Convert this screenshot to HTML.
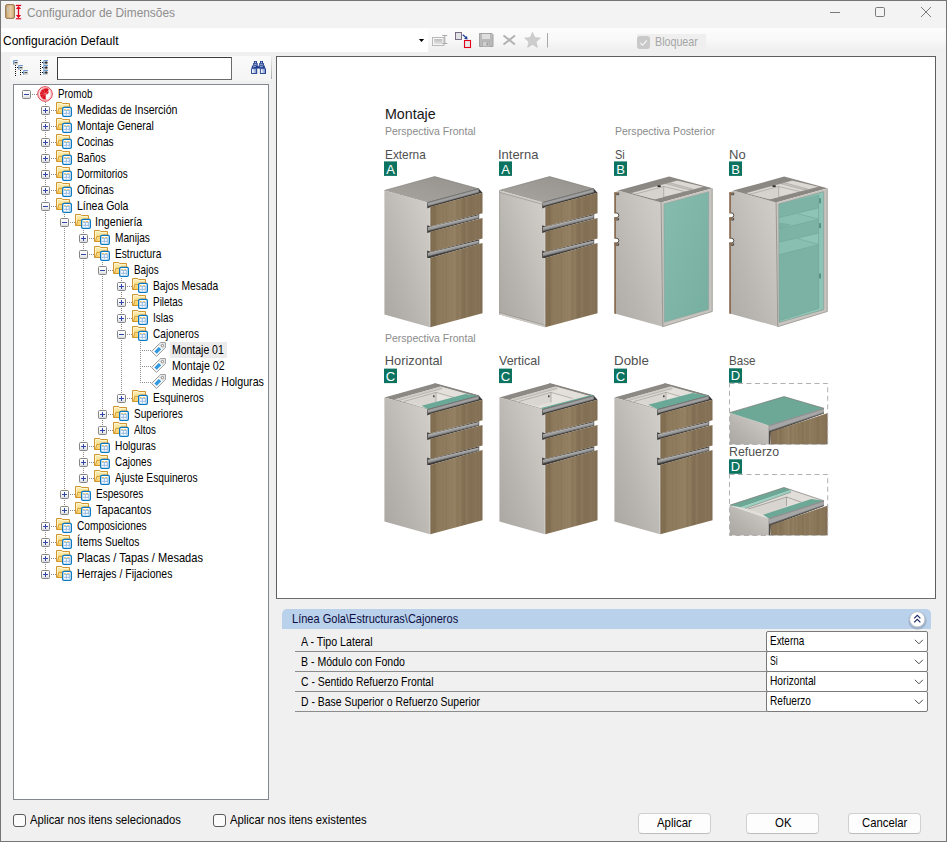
<!DOCTYPE html>
<html lang="es"><head><meta charset="utf-8"><title>Configurador de Dimensões</title>
<style>
*{box-sizing:border-box;margin:0;padding:0}
html,body{width:947px;height:842px;overflow:hidden;background:#f0f0f0}
body{position:relative;font-family:"Liberation Sans",sans-serif;font-size:11px;color:#000}
.abs{position:absolute}
.t{position:absolute;white-space:pre;line-height:1}
#win{position:absolute;left:0;top:0;width:947px;height:842px;border:1px solid #757575;pointer-events:none;z-index:50}
#title{position:absolute;left:1px;top:1px;width:945px;height:27px;background:#f3f3f3}
#tbrow{position:absolute;left:1px;top:28px;width:945px;height:24px;background:linear-gradient(#fcfcfc 0%,#f8f8f8 50%,#eeeeee 100%)}
#combo{position:absolute;left:1px;top:28px;width:427px;height:24px;background:linear-gradient(#fafafa 0,#ffffff 1px)}
#strip{position:absolute;left:10px;top:56px;width:262px;height:25px;background:linear-gradient(#fafafa,#f4f4f4);border-radius:3px}
#search{position:absolute;left:57px;top:57px;width:175px;height:23px;background:#fff;border:1px solid #6b6b6b;border-top-color:#3c3c3c;border-left-color:#3c3c3c}
#tree{position:absolute;left:13px;top:84px;width:256px;height:716px;background:#fff;border:1px solid #828790}
#view{position:absolute;left:276px;top:56px;width:660px;height:543px;background:#fff;border:1px solid #5f5f5f;border-bottom-color:#6e6e6e}
.tl{font-size:11px;letter-spacing:-0.22px;color:#000}
#hdr{position:absolute;left:282px;top:609px;width:649px;height:20px;background:#b9d1ea;border-radius:5px 5px 0 0}
.rowline{position:absolute;left:295px;width:472px;height:1px;background:#8c8c8c}
.cb{position:absolute;left:766px;width:162px;height:21px;background:#fff;border:1px solid #7a7a7a;border-radius:2px}
.btn{position:absolute;top:813px;width:73px;height:21px;background:#fdfdfd;border:1px solid #d0d0d0;border-bottom-color:#bdbdbd;border-radius:4px}
.chk{position:absolute;top:814px;width:13px;height:13px;background:#fbfbfb;border:1px solid #5a5a5a;border-radius:3px}
.b12{font-size:12px;letter-spacing:-0.36px}
.sel{position:absolute;background:#ececec}
</style></head>
<body>
<div id="title"></div>
<svg class="abs" style="left:4px;top:3px" width="20" height="18" viewBox="0 0 20 18">
<defs><linearGradient id="dg" x1="0" x2="1"><stop offset="0" stop-color="#c9a674"/><stop offset=".55" stop-color="#e9cda2"/><stop offset="1" stop-color="#d0ab78"/></linearGradient></defs>
<rect x="1.700" y="1.700" width="8.700" height="13.600" rx="1.200" fill="url(#dg)" stroke="#8d6c41" stroke-width="1"/>
<rect x="3.300" y="4.200" width="1.100" height="4.600" rx=".4" fill="#f0f0f0" stroke="#999" stroke-width=".4"/>
<rect x="11.900" y="1.800" width="5.300" height="1.300" fill="#e2001a"/><rect x="11.900" y="15.200" width="5.300" height="1.100" fill="#e2001a"/>
<path d="M14.500 3.100l2.600 2.900h-5.200zM14.500 15.200l2.600-3.100h-5.200z" fill="#e2001a"/><path d="M14.500 5.500v7" stroke="#e2001a" stroke-width="1.300"/>
</svg>
<span class="t" style="left:26.90px;top:6.00px;font-size:13px;color:#8e8e8e;transform:scaleX(0.9142);transform-origin:0 0;">Configurador de Dimensões</span>
<svg class="abs" style="left:825px;top:1px" width="120" height="26" viewBox="0 0 120 26" fill="none" stroke="#7a7a7a" stroke-width="1">
<path d="M5 11.5h10"/><rect x="50.5" y="6.5" width="9" height="9" rx="1.2"/><path d="M96 6l10 10M106 6l-10 10"/></svg>
<div id="tbrow"></div><div id="combo"></div>
<span class="t" style="left:2.60px;top:34.00px;font-size:13px;color:#000;transform:scaleX(0.9238);transform-origin:0 0;">Configuración Default</span>
<svg class="abs" style="left:418px;top:38px" width="8" height="5"><path d="M0.900 1h5.200l-2.600 3.100z" fill="#000"/></svg>
<svg class="abs" style="left:430px;top:30px" width="122" height="20" viewBox="430 30 122 20">
<defs><linearGradient id="gr1" x1="0" x2="0" y1="0" y2="1"><stop offset="0" stop-color="#bdbdbd"/><stop offset="1" stop-color="#e2e2e2"/></linearGradient></defs>
<rect x="432.500" y="37.500" width="11.500" height="8" fill="#f6f6f6" stroke="#b9b9b9"/><rect x="434.200" y="39" width="8.200" height="5" fill="url(#gr1)"/>
<path d="M442.300 35.500h5M442.300 43.500h5M444.800 35.500v8" stroke="#a9a9a9" stroke-width="1" fill="none"/>
<rect x="455.500" y="32.500" width="6" height="7" fill="#e2e2e6" stroke="#6d5f78" stroke-width=".9"/>
<rect x="464.500" y="40.500" width="6" height="7" fill="#e9e9e9" stroke="#e3001b" stroke-width="1.100"/>
<path d="M462.800 34.800l3.400 3" stroke="#1f3f9a" fill="none" stroke-width="1.200"/><path d="M467.600 39.400l-3.600-.6 3-2.800z" fill="#1f3f9a"/>
<path d="M479.500 33.500h12.500l1 1v12h-13.500z" fill="#b9b9b9" stroke="#a3a3a3"/><rect x="482" y="34" width="8" height="5" fill="#dedede"/><rect x="482.500" y="41.500" width="7" height="5" fill="#d0d0d0" stroke="#a8a8a8" stroke-width=".6"/><rect x="486.500" y="42.500" width="2" height="3" fill="#9f9f9f"/>
<path d="M503.500 35.500l11.500 9M515 35.500l-11.500 9" stroke="#b1b1b1" stroke-width="2" fill="none"/>
<path d="M532.500 32.300l2.300 5.300 5.600.5-4.300 3.800 1.300 5.500-4.900-3-4.900 3 1.300-5.500-4.300-3.800 5.600-.5z" fill="#cdcdcd" stroke="#c3c3c3" stroke-width=".6"/>
<path d="M547.500 33v14.500" stroke="#a9a9a9"/>
</svg>
<div class="abs" style="left:637px;top:34px;width:69px;height:17px;background:#efefef"></div>
<div class="abs" style="left:637px;top:36px;width:13px;height:13px;background:#c9c9c9;border-radius:3px"></div>
<svg class="abs" style="left:637px;top:36px" width="13" height="13"><path d="M3.300 6.800l2.300 2.300 4.200-4.600" stroke="#f4f4f4" stroke-width="1.200" fill="none"/></svg>
<span class="t" style="left:654.80px;top:35.00px;font-size:13px;color:#a6a6a6;transform:scaleX(0.8231);transform-origin:0 0;">Bloquear</span>
<div id="strip"></div><div class="abs" style="left:271px;top:57px;width:1px;height:22px;background:linear-gradient(#ececec,#a8a8a8)"></div>
<svg class="abs" style="left:12px;top:59px" width="40" height="18" viewBox="12 59 40 18">
<defs><linearGradient id="nd" x1="0" x2="0" y1="0" y2="1"><stop offset="0" stop-color="#ffffff"/><stop offset="1" stop-color="#c4c4c4"/></linearGradient></defs>
<g fill="#111" shape-rendering="crispEdges"><rect x="15" y="65" width="1" height="1"/><rect x="15" y="67" width="1" height="1"/><rect x="15" y="69" width="1" height="1"/><rect x="15" y="71" width="1" height="1"/><rect x="15" y="73" width="1" height="1"/><rect x="15" y="75" width="1" height="1"/><rect x="20" y="70" width="1" height="1"/><rect x="20" y="72" width="1" height="1"/><rect x="20" y="74" width="1" height="1"/><rect x="17" y="67" width="1" height="1"/><rect x="22" y="72" width="1" height="1"/><rect x="40" y="60" width="1" height="1"/><rect x="40" y="62" width="1" height="1"/><rect x="40" y="64" width="1" height="1"/><rect x="40" y="66" width="1" height="1"/><rect x="40" y="68" width="1" height="1"/><rect x="40" y="70" width="1" height="1"/><rect x="40" y="72" width="1" height="1"/><rect x="40" y="74" width="1" height="1"/><rect x="42" y="62" width="1" height="1"/><rect x="42" y="67" width="1" height="1"/><rect x="42" y="72" width="1" height="1"/></g>
<rect x="13.3" y="60.2" width="4.600" height="4.400" fill="url(#nd)"/>
<path d="M13.7 64.6V60.6H17.9" stroke="#5b8ec8" stroke-width="1" fill="none"/>
<rect x="18.3" y="65.2" width="4.600" height="4.400" fill="url(#nd)"/>
<path d="M18.7 69.6V65.6H22.9" stroke="#5b8ec8" stroke-width="1" fill="none"/>
<rect x="23.3" y="70.2" width="4.600" height="4.400" fill="url(#nd)"/>
<path d="M23.7 74.6V70.6H27.9" stroke="#5b8ec8" stroke-width="1" fill="none"/>
<rect x="43.4" y="60.2" width="4.600" height="4.400" fill="url(#nd)"/>
<path d="M43.8 64.6V60.6H48.0" stroke="#5b8ec8" stroke-width="1" fill="none"/>
<rect x="43.4" y="65.2" width="4.600" height="4.400" fill="url(#nd)"/>
<path d="M43.8 69.6V65.6H48.0" stroke="#5b8ec8" stroke-width="1" fill="none"/>
<rect x="43.4" y="70.2" width="4.600" height="4.400" fill="url(#nd)"/>
<path d="M43.8 74.6V70.6H48.0" stroke="#5b8ec8" stroke-width="1" fill="none"/>
<rect x="14.6" y="62.1" width="2.800" height="1" fill="#3a3a3a"/>
<rect x="19.6" y="67.1" width="2.800" height="1" fill="#3a3a3a"/>
<rect x="24.6" y="72.1" width="2.800" height="1" fill="#3a3a3a"/>
<rect x="44.6" y="62.1" width="3" height="1" fill="#2a2a2a"/><rect x="45.6" y="61.1" width="1" height="3" fill="#2a2a2a"/>
<rect x="44.6" y="67.1" width="3" height="1" fill="#2a2a2a"/><rect x="45.6" y="66.1" width="1" height="3" fill="#2a2a2a"/>
<rect x="44.6" y="72.1" width="3" height="1" fill="#2a2a2a"/><rect x="45.6" y="71.1" width="1" height="3" fill="#2a2a2a"/>
</svg>
<div id="search"></div>
<svg class="abs" style="left:250px;top:60px" width="17" height="15" viewBox="0 0 17 15">
<defs><linearGradient id="bw" x1="0" x2="1"><stop offset="0" stop-color="#ffffff"/><stop offset="1" stop-color="#7d95cf"/></linearGradient></defs>
<g fill="#1d3c8e"><rect x="3.900" y="1" width="3" height="2.300"/><rect x="3.100" y="3.100" width="4.600" height="2.500"/><path d="M2 5.400h6.200v3.200h-6.700z"/><rect x="1.100" y="8.400" width="6.100" height="5.500"/>
<rect x="10" y="1" width="3" height="2.300"/><rect x="9.200" y="3.100" width="4.700" height="2.500"/><path d="M8.800 5.400h5.800l.7 3.200h-6.500z"/><rect x="9.900" y="8.400" width="6.100" height="5.500"/><rect x="7.600" y="6.300" width="1.800" height="2.200"/></g>
<rect x="2" y="9.100" width="4.200" height="3.900" fill="url(#bw)"/><rect x="10.800" y="9.100" width="4.200" height="3.900" fill="url(#bw)"/>
<g fill="#e8eefb"><rect x="4.900" y="1.800" width="1" height="1"/><rect x="11" y="1.800" width="1" height="1"/></g>
<path d="M3.900 4.300h2.800M10 4.300h2.800M2.900 6.900l2.800-.5M9.800 6.700h3" stroke="#c3d0ef" stroke-width=".8" fill="none"/>
</svg>
<div id="tree"></div>
<svg class="abs" style="left:14px;top:85px" width="254" height="714" viewBox="14 85 254 714">
<defs>
<linearGradient id="fo" x1="0" x2="0" y1="0" y2="1"><stop offset="0" stop-color="#fdf0bd"/><stop offset=".5" stop-color="#fbe08c"/><stop offset="1" stop-color="#f6cd63"/></linearGradient>
<linearGradient id="ex" x1="0" x2="0" y1="0" y2="1"><stop offset="0" stop-color="#ffffff"/><stop offset=".6" stop-color="#f4f4f4"/><stop offset="1" stop-color="#d4d4d4"/></linearGradient>
<g id="fold">
<path d="M0.500 0.500h5.300l0.800 1h6.900v10h-13z" fill="url(#fo)" stroke="#d29631" stroke-width="1" stroke-linejoin="round"/>
<path d="M1.500 10.500v-9h3.600l.8 1h6.600" stroke="#fff9e0" stroke-width=".8" fill="none" opacity=".85"/>
<path d="M1.300 11.400l1.600-5h5" stroke="#d29631" stroke-width=".9" fill="none"/>
<path d="M8.500 4.300h6.200v1.500h-6.200z" fill="#f2a43a" opacity=".75"/>
<rect x="6.650" y="5.450" width="8.700" height="8.900" rx="1.300" fill="#fff" stroke="#0a78c2" stroke-width="1.300"/>
<path d="M8 7.500h1.800M11.100 7.500h2.100" stroke="#f7c331" stroke-width=".9"/>
<path d="M8 8.300h5.600M8 11.300h5.600M10.300 7.900v4.900M13.300 7.900v4.900" stroke="#8db2dd" stroke-width=".9" fill="none"/>
</g>
<g id="tag">
<path d="M0.600 9.500L8.700 1.400 9.500 .600H14.400V5.500L5.500 14.400z" fill="#fbfbfb" stroke="#8a8a8a" stroke-width=".9" stroke-linejoin="round"/>
<path d="M9.300 1.300h4.600v4l-2 2-4.700-3.800z" fill="#e6e6e6"/>
<path d="M3.400 9.500l4.300-4.400 2.500 2.200-4.300 4.500z" fill="#2190dd"/>
<path d="M4.500 8.500l2.400 2.300M5.600 7.400l2.400 2.300M6.700 6.300l2.400 2.300" stroke="#8cc6ee" stroke-width=".4"/>
<circle cx="11.400" cy="3.600" r="1.200" fill="#fff" stroke="#777" stroke-width=".8"/>
</g>
<g id="plus"><rect x="0.500" y="0.500" width="8" height="8" rx="1" fill="url(#ex)" stroke="#858585"/><path d="M2 4.500h5M4.500 2v5" stroke="#2f47a6" stroke-width="1" shape-rendering="crispEdges"/></g>
<g id="minus"><rect x="0.500" y="0.500" width="8" height="8" rx="1" fill="url(#ex)" stroke="#858585"/><path d="M2 4.500h5" stroke="#2f47a6" stroke-width="1" shape-rendering="crispEdges"/></g>
</defs>
<path d="M45.5 102.0V575.0M32.0 94.5H37.0M51.0 110.5H56.0M51.0 126.5H56.0M51.0 142.5H56.0M51.0 158.5H56.0M51.0 174.5H56.0M51.0 190.5H56.0M64.5 214.0V511.0M51.0 206.5H56.0M83.5 230.0V479.0M70.0 222.5H75.0M89.0 238.5H94.0M102.5 262.0V431.0M89.0 254.5H94.0M121.5 278.0V399.0M108.0 270.5H113.0M127.0 286.5H132.0M127.0 302.5H132.0M127.0 318.5H132.0M140.5 342.0V383.0M127.0 334.5H132.0M142.0 350.5H151.0M142.0 366.5H151.0M142.0 382.5H151.0M127.0 398.5H132.0M108.0 414.5H113.0M108.0 430.5H113.0M89.0 446.5H94.0M89.0 462.5H94.0M89.0 478.5H94.0M70.0 494.5H75.0M70.0 510.5H75.0M51.0 526.5H56.0M51.0 542.5H56.0M51.0 558.5H56.0M51.0 574.5H56.0" stroke="#8c8c8c" stroke-width="1" stroke-dasharray="1 1" fill="none" shape-rendering="crispEdges"/>
<use href="#minus" x="22" y="90"/>
<g transform="translate(37,86)"><circle cx="8" cy="8" r="7.300" fill="#fff" stroke="#d9232e" stroke-width=".9"/><circle cx="8" cy="8" r="6.200" fill="none" stroke="#e8707a" stroke-width=".5"/><path d="M8.700 13.700A5.700 5.700 0 0 1 8.700 2.300L10.800 2.600 11.800 3.800 11.100 4.900 12 6.200 11 7 11.200 8.100 8.700 8.400z" fill="#dc0f1c"/><path d="M8.600 8L3.500 5.200M8.600 8L3 8.500M8.600 8L4.500 11.800M8.600 8L6.500 3M8.600 8L10.800 5M8.600 8L11 7" stroke="#f6b5ba" stroke-width=".35"/></g>
<use href="#plus" x="41" y="106"/>
<use href="#fold" x="56" y="102"/>
<use href="#plus" x="41" y="122"/>
<use href="#fold" x="56" y="118"/>
<use href="#plus" x="41" y="138"/>
<use href="#fold" x="56" y="134"/>
<use href="#plus" x="41" y="154"/>
<use href="#fold" x="56" y="150"/>
<use href="#plus" x="41" y="170"/>
<use href="#fold" x="56" y="166"/>
<use href="#plus" x="41" y="186"/>
<use href="#fold" x="56" y="182"/>
<use href="#minus" x="41" y="202"/>
<use href="#fold" x="56" y="198"/>
<use href="#minus" x="60" y="218"/>
<use href="#fold" x="75" y="214"/>
<use href="#plus" x="79" y="234"/>
<use href="#fold" x="94" y="230"/>
<use href="#minus" x="79" y="250"/>
<use href="#fold" x="94" y="246"/>
<use href="#minus" x="98" y="266"/>
<use href="#fold" x="113" y="262"/>
<use href="#plus" x="117" y="282"/>
<use href="#fold" x="132" y="278"/>
<use href="#plus" x="117" y="298"/>
<use href="#fold" x="132" y="294"/>
<use href="#plus" x="117" y="314"/>
<use href="#fold" x="132" y="310"/>
<use href="#minus" x="117" y="330"/>
<use href="#fold" x="132" y="326"/>
<use href="#tag" x="151" y="342"/>
<use href="#tag" x="151" y="358"/>
<use href="#tag" x="151" y="374"/>
<use href="#plus" x="117" y="394"/>
<use href="#fold" x="132" y="390"/>
<use href="#plus" x="98" y="410"/>
<use href="#fold" x="113" y="406"/>
<use href="#plus" x="98" y="426"/>
<use href="#fold" x="113" y="422"/>
<use href="#plus" x="79" y="442"/>
<use href="#fold" x="94" y="438"/>
<use href="#plus" x="79" y="458"/>
<use href="#fold" x="94" y="454"/>
<use href="#plus" x="79" y="474"/>
<use href="#fold" x="94" y="470"/>
<use href="#plus" x="60" y="490"/>
<use href="#fold" x="75" y="486"/>
<use href="#plus" x="60" y="506"/>
<use href="#fold" x="75" y="502"/>
<use href="#plus" x="41" y="522"/>
<use href="#fold" x="56" y="518"/>
<use href="#plus" x="41" y="538"/>
<use href="#fold" x="56" y="534"/>
<use href="#plus" x="41" y="554"/>
<use href="#fold" x="56" y="550"/>
<use href="#plus" x="41" y="570"/>
<use href="#fold" x="56" y="566"/>
</svg>
<div class="sel" style="left:170px;top:342px;width:57px;height:16px"></div>
<span class="t" style="left:58.30px;top:87.00px;font-size:13px;color:#000;transform:scaleX(0.7543);transform-origin:0 0;">Promob</span>
<span class="t" style="left:77.30px;top:103.00px;font-size:13px;color:#000;transform:scaleX(0.8130);transform-origin:0 0;">Medidas de Inserción</span>
<span class="t" style="left:77.30px;top:119.00px;font-size:13px;color:#000;transform:scaleX(0.8000);transform-origin:0 0;">Montaje General</span>
<span class="t" style="left:77.30px;top:135.00px;font-size:13px;color:#000;transform:scaleX(0.7787);transform-origin:0 0;">Cocinas</span>
<span class="t" style="left:77.30px;top:151.00px;font-size:13px;color:#000;transform:scaleX(0.7811);transform-origin:0 0;">Baños</span>
<span class="t" style="left:77.30px;top:167.00px;font-size:13px;color:#000;transform:scaleX(0.7612);transform-origin:0 0;">Dormitorios</span>
<span class="t" style="left:77.30px;top:183.00px;font-size:13px;color:#000;transform:scaleX(0.7830);transform-origin:0 0;">Oficinas</span>
<span class="t" style="left:77.30px;top:199.00px;font-size:13px;color:#000;transform:scaleX(0.8078);transform-origin:0 0;">Línea Gola</span>
<span class="t" style="left:95.48px;top:215.00px;font-size:13px;color:#000;transform:scaleX(0.8175);transform-origin:0 0;">Ingeniería</span>
<span class="t" style="left:115.30px;top:231.00px;font-size:13px;color:#000;transform:scaleX(0.7800);transform-origin:0 0;">Manijas</span>
<span class="t" style="left:115.30px;top:247.00px;font-size:13px;color:#000;transform:scaleX(0.7817);transform-origin:0 0;">Estructura</span>
<span class="t" style="left:134.30px;top:263.00px;font-size:13px;color:#000;transform:scaleX(0.7545);transform-origin:0 0;">Bajos</span>
<span class="t" style="left:153.30px;top:279.00px;font-size:13px;color:#000;transform:scaleX(0.7904);transform-origin:0 0;">Bajos Mesada</span>
<span class="t" style="left:153.30px;top:295.00px;font-size:13px;color:#000;transform:scaleX(0.7641);transform-origin:0 0;">Piletas</span>
<span class="t" style="left:152.54px;top:311.00px;font-size:13px;color:#000;transform:scaleX(0.7615);transform-origin:0 0;">Islas</span>
<span class="t" style="left:153.30px;top:327.00px;font-size:13px;color:#000;transform:scaleX(0.7763);transform-origin:0 0;">Cajoneros</span>
<span class="t" style="left:172.30px;top:343.00px;font-size:13px;color:#000;transform:scaleX(0.8047);transform-origin:0 0;">Montaje 01</span>
<span class="t" style="left:172.30px;top:359.00px;font-size:13px;color:#000;transform:scaleX(0.8187);transform-origin:0 0;">Montaje 02</span>
<span class="t" style="left:172.30px;top:375.00px;font-size:13px;color:#000;transform:scaleX(0.8205);transform-origin:0 0;">Medidas / Holguras</span>
<span class="t" style="left:153.30px;top:391.00px;font-size:13px;color:#000;transform:scaleX(0.7800);transform-origin:0 0;">Esquineros</span>
<span class="t" style="left:134.30px;top:407.00px;font-size:13px;color:#000;transform:scaleX(0.7746);transform-origin:0 0;">Superiores</span>
<span class="t" style="left:134.30px;top:423.00px;font-size:13px;color:#000;transform:scaleX(0.7552);transform-origin:0 0;">Altos</span>
<span class="t" style="left:115.30px;top:439.00px;font-size:13px;color:#000;transform:scaleX(0.7865);transform-origin:0 0;">Holguras</span>
<span class="t" style="left:115.30px;top:455.00px;font-size:13px;color:#000;transform:scaleX(0.7687);transform-origin:0 0;">Cajones</span>
<span class="t" style="left:115.30px;top:471.00px;font-size:13px;color:#000;transform:scaleX(0.7876);transform-origin:0 0;">Ajuste Esquineros</span>
<span class="t" style="left:96.30px;top:487.00px;font-size:13px;color:#000;transform:scaleX(0.7710);transform-origin:0 0;">Espesores</span>
<span class="t" style="left:96.30px;top:503.00px;font-size:13px;color:#000;transform:scaleX(0.8343);transform-origin:0 0;">Tapacantos</span>
<span class="t" style="left:77.30px;top:519.00px;font-size:13px;color:#000;transform:scaleX(0.7843);transform-origin:0 0;">Composiciones</span>
<span class="t" style="left:76.51px;top:535.00px;font-size:13px;color:#000;transform:scaleX(0.7910);transform-origin:0 0;">Ítems Sueltos</span>
<span class="t" style="left:77.30px;top:551.00px;font-size:13px;color:#000;transform:scaleX(0.8514);transform-origin:0 0;">Placas / Tapas / Mesadas</span>
<span class="t" style="left:77.30px;top:567.00px;font-size:13px;color:#000;transform:scaleX(0.8050);transform-origin:0 0;">Herrajes / Fijaciones</span>
<div id="view"></div>
<svg class="abs" style="left:277px;top:57px" width="658" height="541" viewBox="277 57 658 541" font-family="'Liberation Sans',sans-serif">
<defs>
<linearGradient id="wood" gradientUnits="userSpaceOnUse" x1="430" x2="483" y1="0" y2="0">
<stop offset="0.000" stop-color="#716048"/><stop offset="0.019" stop-color="#79664c"/><stop offset="0.038" stop-color="#847155"/><stop offset="0.057" stop-color="#816e51"/><stop offset="0.075" stop-color="#826f52"/><stop offset="0.094" stop-color="#7e6b4e"/><stop offset="0.113" stop-color="#8a7659"/><stop offset="0.132" stop-color="#887457"/><stop offset="0.151" stop-color="#8d795c"/><stop offset="0.170" stop-color="#8d795c"/><stop offset="0.189" stop-color="#8c785a"/><stop offset="0.208" stop-color="#917d60"/><stop offset="0.226" stop-color="#8b7759"/><stop offset="0.245" stop-color="#8d795b"/><stop offset="0.264" stop-color="#8c785a"/><stop offset="0.283" stop-color="#917d5f"/><stop offset="0.302" stop-color="#8a7658"/><stop offset="0.321" stop-color="#8c785a"/><stop offset="0.340" stop-color="#927e60"/><stop offset="0.358" stop-color="#8f7b5d"/><stop offset="0.377" stop-color="#907c5e"/><stop offset="0.396" stop-color="#948062"/><stop offset="0.415" stop-color="#8f7b5d"/><stop offset="0.434" stop-color="#927e60"/><stop offset="0.453" stop-color="#948062"/><stop offset="0.472" stop-color="#958164"/><stop offset="0.491" stop-color="#8f7b5d"/><stop offset="0.509" stop-color="#8b7759"/><stop offset="0.528" stop-color="#897557"/><stop offset="0.547" stop-color="#8f7b5d"/><stop offset="0.566" stop-color="#8f7b5e"/><stop offset="0.585" stop-color="#8b775a"/><stop offset="0.604" stop-color="#847155"/><stop offset="0.623" stop-color="#837055"/><stop offset="0.642" stop-color="#826f53"/><stop offset="0.660" stop-color="#816d51"/><stop offset="0.679" stop-color="#897559"/><stop offset="0.698" stop-color="#8b775b"/><stop offset="0.717" stop-color="#867357"/><stop offset="0.736" stop-color="#836f53"/><stop offset="0.755" stop-color="#847054"/><stop offset="0.774" stop-color="#826f53"/><stop offset="0.792" stop-color="#837054"/><stop offset="0.811" stop-color="#857256"/><stop offset="0.830" stop-color="#826f53"/><stop offset="0.849" stop-color="#877357"/><stop offset="0.868" stop-color="#89765a"/><stop offset="0.887" stop-color="#837054"/><stop offset="0.906" stop-color="#847155"/><stop offset="0.925" stop-color="#8a775b"/><stop offset="0.943" stop-color="#826f53"/><stop offset="0.962" stop-color="#826f53"/><stop offset="0.981" stop-color="#806d53"/><stop offset="1.000" stop-color="#746249"/></linearGradient>
<linearGradient id="wood2" gradientUnits="userSpaceOnUse" x1="770" x2="828" y1="0" y2="0">
<stop offset="0.000" stop-color="#79674e"/><stop offset="0.017" stop-color="#827056"/><stop offset="0.034" stop-color="#837055"/><stop offset="0.052" stop-color="#857155"/><stop offset="0.069" stop-color="#8a765a"/><stop offset="0.086" stop-color="#857155"/><stop offset="0.103" stop-color="#867255"/><stop offset="0.121" stop-color="#867256"/><stop offset="0.138" stop-color="#907c5f"/><stop offset="0.155" stop-color="#8d795c"/><stop offset="0.172" stop-color="#826e52"/><stop offset="0.190" stop-color="#877356"/><stop offset="0.207" stop-color="#8a7659"/><stop offset="0.224" stop-color="#897557"/><stop offset="0.241" stop-color="#8e7a5c"/><stop offset="0.259" stop-color="#8f7b5d"/><stop offset="0.276" stop-color="#8f7b5d"/><stop offset="0.293" stop-color="#8f7b5d"/><stop offset="0.310" stop-color="#958163"/><stop offset="0.328" stop-color="#937f61"/><stop offset="0.345" stop-color="#8d795b"/><stop offset="0.362" stop-color="#867254"/><stop offset="0.379" stop-color="#907c5f"/><stop offset="0.397" stop-color="#917d5f"/><stop offset="0.414" stop-color="#917d60"/><stop offset="0.431" stop-color="#877356"/><stop offset="0.448" stop-color="#907c5e"/><stop offset="0.466" stop-color="#907c5f"/><stop offset="0.483" stop-color="#867255"/><stop offset="0.500" stop-color="#8d795c"/><stop offset="0.517" stop-color="#867255"/><stop offset="0.534" stop-color="#8f7b5e"/><stop offset="0.552" stop-color="#877356"/><stop offset="0.569" stop-color="#816d50"/><stop offset="0.586" stop-color="#8f7b5d"/><stop offset="0.603" stop-color="#8d795b"/><stop offset="0.621" stop-color="#897558"/><stop offset="0.638" stop-color="#897557"/><stop offset="0.655" stop-color="#897557"/><stop offset="0.672" stop-color="#8b7759"/><stop offset="0.690" stop-color="#937f61"/><stop offset="0.707" stop-color="#8c785a"/><stop offset="0.724" stop-color="#8a7659"/><stop offset="0.741" stop-color="#907c5f"/><stop offset="0.759" stop-color="#887457"/><stop offset="0.776" stop-color="#897558"/><stop offset="0.793" stop-color="#8e7a5d"/><stop offset="0.810" stop-color="#826f52"/><stop offset="0.828" stop-color="#867255"/><stop offset="0.845" stop-color="#877357"/><stop offset="0.862" stop-color="#887457"/><stop offset="0.879" stop-color="#8d7a5d"/><stop offset="0.897" stop-color="#887559"/><stop offset="0.914" stop-color="#847155"/><stop offset="0.931" stop-color="#8b785b"/><stop offset="0.948" stop-color="#847155"/><stop offset="0.966" stop-color="#857257"/><stop offset="0.983" stop-color="#7c694f"/><stop offset="1.000" stop-color="#7f6d54"/></linearGradient>
<linearGradient id="side" x1="1" x2="0" y1="0" y2="1"><stop offset="0" stop-color="#d3d0cb"/><stop offset=".3" stop-color="#c7c4bf"/><stop offset=".62" stop-color="#b8b5b0"/><stop offset="1" stop-color="#aaa7a2"/></linearGradient>
<linearGradient id="sideR" x1="1" x2="0" y1="0" y2="1"><stop offset="0" stop-color="#d2cfca"/><stop offset=".3" stop-color="#c8c5c0"/><stop offset=".65" stop-color="#bab7b2"/><stop offset="1" stop-color="#afaca7"/></linearGradient>
<linearGradient id="top" x1="0" x2="1" y1="1" y2="0"><stop offset="0" stop-color="#a8a5a0"/><stop offset="1" stop-color="#95928d"/></linearGradient>
<linearGradient id="alu" x1="0" x2="0" y1="0" y2="1"><stop offset="0" stop-color="#8c8c8c"/><stop offset=".35" stop-color="#c9c9c9"/><stop offset=".7" stop-color="#a8a8a8"/><stop offset="1" stop-color="#4a4a4a"/></linearGradient>
<linearGradient id="teal" x1="0" x2="1" y1="0" y2="1"><stop offset="0" stop-color="#86bcae"/><stop offset="1" stop-color="#76ae9f"/></linearGradient>

<g id="fbody"><path d="M384.400 190.400L427.400 202.200 430 203V327.200L384.400 314.500z" fill="url(#side)"/>
<path d="M429.700 208V327" stroke="#d8d5d0" stroke-width=".6"/>
<path d="M427.400 202.200L478.700 188.600 482.500 192.700 430.500 207 427.200 208.600z" fill="#3f3d3b"/>
<path d="M427.200 225.200L430.500 226.400 479.200 214 479.200 218.800 430.500 232 427.200 233z" fill="#3f3d3b"/>
<path d="M427.200 250.400L430.500 251.800 479.200 239.300 479.200 243.900 430.500 258 427.200 258z" fill="#3f3d3b"/>
<path d="M430.300 206.800L482.500 192.700V213.200L430.300 226.600z" fill="url(#wood)"/>
<path d="M430.300 231.800L482.500 217.900V238.400L430.300 252.100z" fill="url(#wood)"/>
<path d="M430.300 258L482.500 242.900V313.300L430.300 327.200z" fill="url(#wood)"/>
<path d="M428 202.400L478.7 188.800V192L428 205.700z" fill="#a0a0a0"/>
<path d="M428 202.500L478.7 188.900" stroke="#777777" stroke-width=".9"/>
<path d="M428 205.700L478.7 192" stroke="#8e8e8e" stroke-width=".7"/>
<path d="M428 227.6L478.7 215.3V217.9L428 230.6z" fill="#9a9a9a"/>
<path d="M428 227.9L478.7 215.60000000000002" stroke="#bdbdbd" stroke-width=".7"/>
<path d="M428 230.6L478.7 217.9" stroke="#7a7a7a" stroke-width=".8"/>
<path d="M428 253L478.7 240.7V243.29999999999998L428 256z" fill="#9a9a9a"/>
<path d="M428 253.3L478.7 241.0" stroke="#bdbdbd" stroke-width=".7"/>
<path d="M428 256L478.7 243.29999999999998" stroke="#7a7a7a" stroke-width=".8"/></g>
</defs>
<rect x="384" y="161.4" width="13" height="14.500" fill="#0b735f"/>
<text x="390.5" y="173.5" font-size="13" fill="#fff" text-anchor="middle">A</text>
<rect x="499" y="161.4" width="13" height="14.500" fill="#0b735f"/>
<text x="505.5" y="173.5" font-size="13" fill="#fff" text-anchor="middle">A</text>
<rect x="614" y="161.4" width="13" height="14.500" fill="#0b735f"/>
<text x="620.5" y="173.5" font-size="13" fill="#fff" text-anchor="middle">B</text>
<rect x="729" y="161.4" width="13" height="14.500" fill="#0b735f"/>
<text x="735.5" y="173.5" font-size="13" fill="#fff" text-anchor="middle">B</text>
<rect x="384" y="368.6" width="13" height="14.500" fill="#0b735f"/>
<text x="390.5" y="380.70000000000005" font-size="13" fill="#fff" text-anchor="middle">C</text>
<rect x="499" y="368.6" width="13" height="14.500" fill="#0b735f"/>
<text x="505.5" y="380.70000000000005" font-size="13" fill="#fff" text-anchor="middle">C</text>
<rect x="614" y="368.6" width="13" height="14.500" fill="#0b735f"/>
<text x="620.5" y="380.70000000000005" font-size="13" fill="#fff" text-anchor="middle">C</text>
<rect x="729" y="368.3" width="13" height="14.500" fill="#0b735f"/>
<text x="735.5" y="380.40000000000003" font-size="13" fill="#fff" text-anchor="middle">D</text>
<rect x="729" y="459.3" width="13" height="14.500" fill="#0b735f"/>
<text x="735.5" y="471.40000000000003" font-size="13" fill="#fff" text-anchor="middle">D</text>
<g><path d="M384.400 190.400L434.600 176.600 478.700 188.800 427.400 202.400z" fill="url(#top)"/><path d="M384.400 190.400L434.600 176.600 478.700 188.800" stroke="#7b7873" stroke-width=".6" fill="none"/><use href="#fbody"/></g>
<g transform="translate(115 0)"><path d="M384.400 190.400L434.600 176.600 478.700 188.800 427.400 202.400z" fill="url(#top)"/><path d="M384.400 190.400L434.600 176.600 478.700 188.800" stroke="#7b7873" stroke-width=".6" fill="none"/><use href="#fbody"/><path d="M384.400 312.500L430 325.200V327.200L384.400 314.500z" fill="#ccc9c4"/><path d="M384.400 190.400L427.400 202.200V204.200L384.400 192.300z" fill="#cfccc7"/><path d="M384.400 192.300L428.500 204.500M384.400 312.500L430 325.200" stroke="#8f8c87" stroke-width=".6" fill="none"/><path d="M384.600 190.600V314.400" stroke="#8f8c87" stroke-width=".6"/></g>
<g><path d="M615.800 192.300L618.100 190.600 661.600 202.600 663 326.700 614.800 313.600z" fill="url(#sideR)"/>
<path d="M614.200 192.400H616V313.900L614.200 313.400z" fill="#8a6f55"/>
<path d="M614.200 192.300H618V194.300H614.200z" fill="#8a6f55"/>
<path d="M616.200 194.700H618.700V192.600" stroke="#3f3c39" stroke-width=".9" fill="none"/>
<path d="M613 213.4H616.400A1.900 1.900 0 0 1 616.400 217.20000000000002H613z" fill="#fff"/>
<path d="M615.800 212.9H616.400A2.400 2.400 0 0 1 616.400 217.70000000000002" stroke="#4b4743" stroke-width=".9" fill="none"/>
<path d="M614.200 217.20000000000002H617.800V219.60000000000002H614.200z" fill="#8a6f55"/>
<path d="M616.200 220.0H618.600V217.9" stroke="#3f3c39" stroke-width=".9" fill="none"/>
<path d="M613 238.7H616.400A1.900 1.900 0 0 1 616.400 242.5H613z" fill="#fff"/>
<path d="M615.800 238.2H616.400A2.400 2.400 0 0 1 616.400 243.0" stroke="#4b4743" stroke-width=".9" fill="none"/>
<path d="M614.200 242.5H617.800V244.9H614.200z" fill="#8a6f55"/>
<path d="M616.200 245.29999999999998H618.600V243.2" stroke="#3f3c39" stroke-width=".9" fill="none"/>
<path d="M618.100 190.600L669.200 176.600 712.500 188.300 661.100 202.400z" fill="#8b8883"/>
<path d="M630.900 192.900L676.800 180.400 703.500 186.800 654.700 199.300z" fill="#dcd9d4"/>
<path d="M635 194.100L663.700 186.500V197L655 199.200z" fill="#d6d3ce"/>
<path d="M665.500 183.600L669 182.600 692.500 188.900 689 189.900z" fill="#c9c6c1" stroke="#8d8a85" stroke-width=".4"/>
<path d="M630.900 192.900L676.800 180.400M635 194.100L663.700 186.500 685.500 191.700M663.700 186.500V197" stroke="#8d8a85" stroke-width=".5" fill="none"/>
<rect x="657.500" y="185.300" width="3.200" height="1.800" fill="#2a2a2a"/>
<path d="M661.100 202.400L712.500 188.300V311.500L662.800 326.700z" fill="#c8c5c0"/>
<path d="M661.100 202.400L662.800 326.700" stroke="#8e8b86" stroke-width=".8"/>
<path d="M712.200 188.500V311.500L662.800 326.700" stroke="#98958f" stroke-width=".8" fill="none"/>
<path d="M663.900 204L708.700 191.700V309.600L664.300 322.300z" fill="url(#teal)"/>
<path d="M663.900 204L708.700 191.700V309.600L664.300 322.300z" fill="none" stroke="#8f9d97" stroke-width=".5"/></g>
<g transform="translate(115 0)"><path d="M615.800 192.300L618.100 190.600 661.600 202.600 663 326.700 614.800 313.600z" fill="url(#sideR)"/>
<path d="M614.200 192.400H616V313.900L614.200 313.400z" fill="#8a6f55"/>
<path d="M614.200 192.300H618V194.300H614.200z" fill="#8a6f55"/>
<path d="M616.200 194.700H618.700V192.600" stroke="#3f3c39" stroke-width=".9" fill="none"/>
<path d="M613 213.4H616.400A1.900 1.900 0 0 1 616.400 217.20000000000002H613z" fill="#fff"/>
<path d="M615.800 212.9H616.400A2.400 2.400 0 0 1 616.400 217.70000000000002" stroke="#4b4743" stroke-width=".9" fill="none"/>
<path d="M614.200 217.20000000000002H617.800V219.60000000000002H614.200z" fill="#8a6f55"/>
<path d="M616.200 220.0H618.600V217.9" stroke="#3f3c39" stroke-width=".9" fill="none"/>
<path d="M613 238.7H616.400A1.900 1.900 0 0 1 616.400 242.5H613z" fill="#fff"/>
<path d="M615.800 238.2H616.400A2.400 2.400 0 0 1 616.400 243.0" stroke="#4b4743" stroke-width=".9" fill="none"/>
<path d="M614.200 242.5H617.800V244.9H614.200z" fill="#8a6f55"/>
<path d="M616.200 245.29999999999998H618.600V243.2" stroke="#3f3c39" stroke-width=".9" fill="none"/>
<path d="M618.100 190.600L669.200 176.600 712.500 188.300 661.100 202.400z" fill="#8b8883"/>
<path d="M630.900 192.900L676.800 180.400 703.500 186.800 654.700 199.300z" fill="#dcd9d4"/>
<path d="M635 194.100L663.700 186.500V197L655 199.200z" fill="#d6d3ce"/>
<path d="M665.500 183.600L669 182.600 692.500 188.900 689 189.900z" fill="#c9c6c1" stroke="#8d8a85" stroke-width=".4"/>
<path d="M630.900 192.900L676.800 180.400M635 194.100L663.700 186.500 685.500 191.700M663.700 186.500V197" stroke="#8d8a85" stroke-width=".5" fill="none"/>
<rect x="657.500" y="185.300" width="3.200" height="1.800" fill="#2a2a2a"/>
<path d="M661.100 202.400L712.500 188.300V311.500L662.800 326.700z" fill="#c8c5c0"/>
<path d="M661.100 202.400L662.800 326.700" stroke="#8e8b86" stroke-width=".8"/>
<path d="M712.200 188.500V311.500L662.800 326.700" stroke="#98958f" stroke-width=".8" fill="none"/>
<path d="M663.900 204L708.700 191.700V309.600L664.300 322.300z" fill="url(#teal)"/>
<path d="M663.900 204L708.700 191.700V309.600L664.300 322.300z" fill="none" stroke="#8f9d97" stroke-width=".5"/>
<path d="M663.900 204L708.700 191.700V309.600L664.300 322.300z" fill="#8dc4b5"/>
<path d="M663.900 204L703.600 194.600V207.900L663.900 217.800z" fill="#7cb3a4"/>
<path d="M663.900 218.700L682.400 213.700 703.600 219.100 663.900 229z" fill="#88bfb0"/>
<path d="M663.900 222.400L676.600 224.500 663.900 229z" fill="#79b0a1"/>
<path d="M663.900 229L703.600 219.500V233.200L663.900 242.300z" fill="#7cb3a4"/>
<path d="M663.900 243.200L682.400 238.600 703.600 244.400 663.900 254.800z" fill="#88bfb0"/>
<path d="M663.900 254.800L703.600 244.800V308.300L663.900 320.700z" fill="#7bb2a3"/>
<path d="M663.900 217.800L703.600 207.900M682.400 213.700L703.600 219.100M663.900 229L703.600 219.300M663.900 242.300L703.600 233.200M682.400 238.600L703.600 244.400M663.900 254.800L703.600 244.600M703.600 194.600V308.300M663.900 320.700L703.600 308.300" stroke="#6aa192" stroke-width=".5" fill="none"/>
<rect x="704.300" y="198.3" width="1.500" height="5" fill="#4a8070"/>
<rect x="704.300" y="223.2" width="1.500" height="5" fill="#4a8070"/>
<rect x="704.300" y="273.5" width="1.500" height="5" fill="#4a8070"/>
<path d="M663.900 204L708.700 191.700V309.600L664.300 322.300z" fill="none" stroke="#8f9d97" stroke-width=".5"/></g>
<g transform="translate(0 207)"><path d="M384.400 190.400L434.400 176.400 478.700 188.600 427.400 202.200z" fill="#8c8984"/>
<path d="M394.400 192.600L440.800 179.600 476.200 189.200 427.400 202.200z" fill="#e3e0db"/>
<path d="M394.400 192.600L440.800 179.600 442.500 181.400 397.500 193.800z" fill="#cfccc7"/>
<path d="M397.500 193.800L442.500 181.400 441.800 183.200 403.800 194.500z" fill="#dcd9d4"/>
<path d="M397.500 193.800L442.500 181.400" stroke="#9a9792" stroke-width=".5"/>
<path d="M403.800 194.500L436 185.400V195L422 199z" fill="#d9d6d1"/>
<path d="M436 185.400L457.600 191.500 436 197.500z" fill="#e7e4df"/>
<path d="M403.800 194.500L436 185.400 457.600 191.500M436 185.400V195.500" stroke="#8d8a85" stroke-width=".55" fill="none"/>
<rect x="433.200" y="188.300" width="1.300" height="2" rx=".5" fill="#1e1e1e"/>
<path d="M394.400 192.600L427.400 202.200" stroke="#8d8a85" stroke-width=".5"/>
<path d="M434.400 176.700L478.400 188.800" stroke="#86837e" stroke-width="1.300"/>
<path d="M421.600 198.700L465.400 186.900 478.700 188.700 427.700 202.300z" fill="#6aa998"/><use href="#fbody"/></g>
<g transform="translate(115 207)"><path d="M384.400 190.400L434.400 176.400 478.700 188.600 427.400 202.200z" fill="#8c8984"/>
<path d="M394.400 192.600L440.800 179.600 476.200 189.200 427.400 202.200z" fill="#e3e0db"/>
<path d="M394.400 192.600L440.800 179.600 442.500 181.400 397.500 193.800z" fill="#cfccc7"/>
<path d="M397.500 193.800L442.500 181.400 441.800 183.200 403.800 194.500z" fill="#dcd9d4"/>
<path d="M397.500 193.800L442.500 181.400" stroke="#9a9792" stroke-width=".5"/>
<path d="M403.800 194.500L436 185.400V195L422 199z" fill="#d9d6d1"/>
<path d="M436 185.400L457.600 191.500 436 197.500z" fill="#e7e4df"/>
<path d="M403.800 194.500L436 185.400 457.600 191.500M436 185.400V195.500" stroke="#8d8a85" stroke-width=".55" fill="none"/>
<rect x="433.200" y="188.300" width="1.300" height="2" rx=".5" fill="#1e1e1e"/>
<path d="M394.400 192.600L427.400 202.200" stroke="#8d8a85" stroke-width=".5"/>
<path d="M434.400 176.700L478.400 188.800" stroke="#86837e" stroke-width="1.300"/>
<path d="M426 201L477.300 187.700 478.700 188.700 427.700 202.300z" fill="#6aa998"/><use href="#fbody"/></g>
<g transform="translate(230 207)"><path d="M384.400 190.400L434.400 176.400 478.700 188.600 427.400 202.200z" fill="#8c8984"/>
<path d="M394.400 192.600L440.800 179.600 476.200 189.200 427.400 202.200z" fill="#e3e0db"/>
<path d="M394.400 192.600L440.800 179.600 442.500 181.400 397.500 193.800z" fill="#cfccc7"/>
<path d="M397.500 193.800L442.500 181.400 441.800 183.200 403.800 194.500z" fill="#dcd9d4"/>
<path d="M397.500 193.800L442.500 181.400" stroke="#9a9792" stroke-width=".5"/>
<path d="M403.800 194.500L436 185.400V195L422 199z" fill="#d9d6d1"/>
<path d="M436 185.400L457.600 191.500 436 197.500z" fill="#e7e4df"/>
<path d="M403.800 194.500L436 185.400 457.600 191.500M436 185.400V195.500" stroke="#8d8a85" stroke-width=".55" fill="none"/>
<rect x="433.200" y="188.300" width="1.300" height="2" rx=".5" fill="#1e1e1e"/>
<path d="M394.400 192.600L427.400 202.200" stroke="#8d8a85" stroke-width=".5"/>
<path d="M434.400 176.700L478.400 188.800" stroke="#86837e" stroke-width="1.300"/>
<path d="M418.200 197.700L462.500 185.900 478.700 188.700 427.700 202.300z" fill="#6aa998"/><use href="#fbody"/></g>
<clipPath id="cpB"><rect x="729.500" y="383.5" width="98.200" height="61"/></clipPath>
<g clip-path="url(#cpB)">
<path d="M729.5 412.7L768.8 425.4L770 444.7H729.500z" fill="url(#side)"/>
<path d="M729.5 412.7L784.0 396.6L824.0 408.3L768.8 425.4z" fill="#6da897"/>
<path d="M729.5 412.7L784.0 396.6L824.0 408.3" stroke="#7d7a75" stroke-width=".7" fill="none"/>
<path d="M768.8 425.4L824 408.3V413.5L771 432.59999999999997L770 444.7H768.8z" fill="#4a4744"/>
<path d="M770.500 432.0L828 412.90000000000003V444.7H770.500z" fill="url(#wood2)"/>
<path d="M768.8 425.4L824 408.3V412.7L769.3 431.09999999999997z" fill="#a6a6a6"/>
<path d="M768.8 425.79999999999995L824 408.7" stroke="#8a8a8a" stroke-width=".8"/>
<path d="M769.3 431.09999999999997L824 412.7" stroke="#6a6a6a" stroke-width=".8"/>
</g>
<rect x="729.500" y="383.5" width="98.200" height="61" fill="none" stroke="#b0b0b0" stroke-width="1" stroke-dasharray="5 3.500"/>
<clipPath id="cpR"><rect x="729.500" y="474.5" width="98.200" height="61"/></clipPath>
<g clip-path="url(#cpR)">
<path d="M729.5 505.3L768.8 518.6L770 535.7H729.500z" fill="url(#side)"/>
<path d="M729.5 505.3L784.0 487.5L824.0 500.8L768.8 518.6z" fill="#e1ded9"/>
<path d="M729.500 505.300L784 487.500 791 490.100 740.900 507.200z" fill="#6da897"/>
<path d="M740.900 507.200L791 490.100V492.200L745.300 508.400z" fill="#9dd2c3"/>
<path d="M747.900 509.100L786.500 497V506L766 515.500z" fill="#d8d5d0"/>
<path d="M745.300 508.400L791 492.200M747.900 509.100L786.500 497 801.100 502.100M786.500 497V505.900" stroke="#85827d" stroke-width=".6" fill="none"/>
<path d="M763.100 514.800L811.300 498.900 824 500.800 768.800 518.600z" fill="#6da897"/>
<path d="M729.5 505.3L784.0 487.5L824.0 500.8" stroke="#7d7a75" stroke-width=".7" fill="none"/>
<path d="M768.8 518.6L824 500.8V506.0L771 525.8000000000001L770 535.7H768.8z" fill="#4a4744"/>
<path d="M770.500 525.2L828 505.40000000000003V535.7H770.500z" fill="url(#wood2)"/>
<path d="M768.8 518.6L824 500.8V505.2L769.3 524.3000000000001z" fill="#a6a6a6"/>
<path d="M768.8 519.0L824 501.2" stroke="#8a8a8a" stroke-width=".8"/>
<path d="M769.3 524.3000000000001L824 505.2" stroke="#6a6a6a" stroke-width=".8"/>
</g>
<rect x="729.500" y="474.5" width="98.200" height="61" fill="none" stroke="#b0b0b0" stroke-width="1" stroke-dasharray="5 3.500"/>
</svg>
<span class="t" style="left:384.90px;top:106.00px;font-size:14.2px;color:#161616;transform:translateY(0.90px) scaleX(1.0041);transform-origin:0 0;">Montaje</span>
<span class="t" style="left:384.70px;top:126.00px;font-size:10.6px;color:#8b8b8b;transform:translateY(0.40px) scaleX(0.9923);transform-origin:0 0;">Perspectiva Frontal</span>
<span class="t" style="left:614.90px;top:126.00px;font-size:10.6px;color:#8b8b8b;transform:translateY(0.40px) scaleX(0.9931);transform-origin:0 0;">Perspectiva Posterior</span>
<span class="t" style="left:384.70px;top:332.00px;font-size:10.6px;color:#8b8b8b;transform:translateY(0.60px) scaleX(0.9923);transform-origin:0 0;">Perspectiva Frontal</span>
<span class="t" style="left:384.70px;top:148.00px;font-size:12.8px;color:#505050;transform:translateY(0.50px) scaleX(0.9244);transform-origin:0 0;">Externa</span>
<span class="t" style="left:498.19px;top:148.00px;font-size:12.8px;color:#505050;transform:translateY(0.50px) scaleX(1.0128);transform-origin:0 0;">Interna</span>
<span class="t" style="left:614.90px;top:148.00px;font-size:12.8px;color:#505050;transform:translateY(0.50px) scaleX(0.8636);transform-origin:0 0;">Si</span>
<span class="t" style="left:729.20px;top:148.00px;font-size:12.8px;color:#505050;transform:translateY(0.50px) scaleX(1.0187);transform-origin:0 0;">No</span>
<span class="t" style="left:384.80px;top:355.00px;font-size:12.8px;color:#505050;">Horizontal</span>
<span class="t" style="left:499.10px;top:355.00px;font-size:12.8px;color:#505050;transform:scaleX(0.9762);transform-origin:0 0;">Vertical</span>
<span class="t" style="left:614.20px;top:355.00px;font-size:12.8px;color:#505050;transform:scaleX(1.0424);transform-origin:0 0;">Doble</span>
<span class="t" style="left:729.30px;top:355.00px;font-size:12.8px;color:#505050;transform:scaleX(0.9069);transform-origin:0 0;">Base</span>
<span class="t" style="left:729.30px;top:445.00px;font-size:12.8px;color:#505050;transform:translateY(0.80px) scaleX(0.9635);transform-origin:0 0;">Refuerzo</span>
<div id="hdr"></div>
<span class="t" style="left:291.90px;top:612.00px;font-size:13px;color:#0c0c44;transform:scaleX(0.8485);transform-origin:0 0;">Línea Gola\Estructuras\Cajoneros</span>
<svg class="abs" style="left:906px;top:608px" width="24" height="24" viewBox="0 0 24 24">
<defs><radialGradient id="sh" cx=".5" cy=".55" r=".5"><stop offset=".78" stop-color="#6b7a90" stop-opacity=".38"/><stop offset="1" stop-color="#6b7a90" stop-opacity="0"/></radialGradient></defs>
<circle cx="11.500" cy="12" r="10" fill="url(#sh)"/><circle cx="11.300" cy="11.300" r="7.600" fill="#fff" stroke="#b8bec8" stroke-width=".8"/>
<path d="M8.200 10.300l3.100-2.900 3.100 2.900M8.200 14.300l3.100-2.900 3.100 2.900" stroke="#1a2460" stroke-width="1.150" fill="none"/></svg>
<span class="t" style="left:301.20px;top:635.00px;font-size:13px;color:#000;transform:scaleX(0.8195);transform-origin:0 0;">A - Tipo Lateral</span>
<div class="rowline" style="top:651px"></div>
<div class="cb" style="top:631px"></div>
<span class="t" style="left:769.80px;top:634.00px;font-size:13px;color:#000;transform:scaleX(0.7644);transform-origin:0 0;">Externa</span>
<svg class="abs" style="left:913px;top:639px" width="11" height="7"><path d="M1.900 .800l4 4 4-4" stroke="#4a4a4a" stroke-width="1" fill="none"/></svg>
<span class="t" style="left:301.20px;top:655.00px;font-size:13px;color:#000;transform:scaleX(0.8125);transform-origin:0 0;">B - Módulo con Fondo</span>
<div class="rowline" style="top:671px"></div>
<div class="cb" style="top:651px"></div>
<span class="t" style="left:769.80px;top:654.00px;font-size:13px;color:#000;transform:scaleX(0.6636);transform-origin:0 0;">Si</span>
<svg class="abs" style="left:913px;top:659px" width="11" height="7"><path d="M1.900 .800l4 4 4-4" stroke="#4a4a4a" stroke-width="1" fill="none"/></svg>
<span class="t" style="left:301.20px;top:675.00px;font-size:13px;color:#000;transform:scaleX(0.8006);transform-origin:0 0;">C - Sentido Refuerzo Frontal</span>
<div class="rowline" style="top:691px"></div>
<div class="cb" style="top:671px"></div>
<span class="t" style="left:769.80px;top:674.00px;font-size:13px;color:#000;transform:scaleX(0.7828);transform-origin:0 0;">Horizontal</span>
<svg class="abs" style="left:913px;top:679px" width="11" height="7"><path d="M1.900 .800l4 4 4-4" stroke="#4a4a4a" stroke-width="1" fill="none"/></svg>
<span class="t" style="left:301.20px;top:695.00px;font-size:13px;color:#000;transform:scaleX(0.8018);transform-origin:0 0;">D - Base Superior o Refuerzo Superior</span>
<div class="rowline" style="top:711px"></div>
<div class="cb" style="top:691px"></div>
<span class="t" style="left:769.80px;top:694.00px;font-size:13px;color:#000;transform:scaleX(0.7755);transform-origin:0 0;">Refuerzo</span>
<svg class="abs" style="left:913px;top:699px" width="11" height="7"><path d="M1.900 .800l4 4 4-4" stroke="#4a4a4a" stroke-width="1" fill="none"/></svg>
<div class="chk" style="left:13px"></div>
<span class="t" style="left:30.00px;top:813.00px;font-size:13px;color:#000;transform:scaleX(0.8629);transform-origin:0 0;">Aplicar nos itens selecionados</span>
<div class="chk" style="left:213px"></div>
<span class="t" style="left:230.00px;top:813.00px;font-size:13px;color:#000;transform:scaleX(0.8671);transform-origin:0 0;">Aplicar nos itens existentes</span>
<div class="btn" style="left:638px"></div>
<span class="t" style="left:657.00px;top:816.00px;font-size:13px;color:#000;transform:scaleX(0.8750);transform-origin:0 0;">Aplicar</span>
<div class="btn" style="left:746px"></div>
<span class="t" style="left:774.70px;top:816.00px;font-size:13px;color:#000;transform:scaleX(0.8789);transform-origin:0 0;">OK</span>
<div class="btn" style="left:848px"></div>
<span class="t" style="left:861.80px;top:816.00px;font-size:13px;color:#000;transform:scaleX(0.8692);transform-origin:0 0;">Cancelar</span>
<div id="win"></div>
</body></html>
